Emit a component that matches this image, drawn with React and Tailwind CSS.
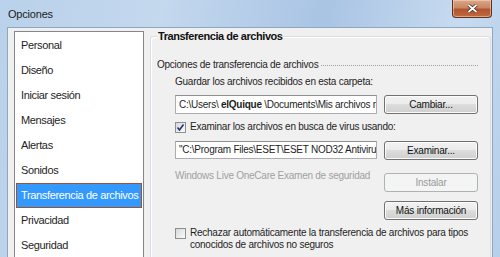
import React from "react";

const font = { fontFamily: "'Liberation Sans', Arial, sans-serif" };

function Btn({ children, disabled }) {
  return (
    <div
      className={
        "w-[94px] h-[19px] shrink-0 rounded-[3px] border flex items-center justify-center text-[10px] tracking-[-0.2px] " +
        (disabled
          ? "border-[#adb2b5] bg-[#f4f4f4] text-[#9a9a9a]"
          : "border-[#707070] bg-[linear-gradient(#f2f2f2_0%,#ebebeb_49%,#dddddd_50%,#cfcfcf_100%)] text-[#111] shadow-[inset_0_0_0_1px_#fcfcfc]")
      }
    >
      {children}
    </div>
  );
}

function Check({ checked }) {
  return (
    <div className="w-[11px] h-[11px] border border-[#8e8f8f] bg-[linear-gradient(135deg,#d8d8d8,#fbfbfb)] flex items-center justify-center shrink-0">
      {checked && (
        <svg width="9" height="9" viewBox="0 0 9 9">
          <path d="M1.5 4.5 L3.5 7 L7.5 1.5" fill="none" stroke="#21327a" strokeWidth="1.6" />
        </svg>
      )}
    </div>
  );
}

export default function App() {
  const items = [
    "Personal",
    "Diseño",
    "Iniciar sesión",
    "Mensajes",
    "Alertas",
    "Sonidos",
    "Transferencia de archivos",
    "Privacidad",
    "Seguridad",
  ];
  return (
    <div
      style={font}
      className="w-[500px] h-[257px] overflow-hidden flex flex-col bg-[linear-gradient(100deg,#b9d1ea_0%,#c4d8ee_30%,#a9c4e4_60%,#c7dbf0_85%,#b6cfea_100%)]"
    >
      {/* title bar */}
      <div className="h-[27px] flex items-start shrink-0">
        <div className="pl-[8px] pt-[7px] text-[11px] tracking-[-0.2px] leading-[14px] text-[#1e1e1e]">Opciones</div>
        <div className="ml-auto mr-[8px] w-[40px] h-[18px] rounded-b-[4px] border border-t-0 border-[#5a3426] bg-[linear-gradient(#dba888_0%,#c98663_45%,#b3542f_55%,#c06a3f_100%)] flex items-center justify-center shadow-[inset_0_0_0_1px_rgba(255,220,200,0.5)]">
          <svg width="11" height="9" viewBox="0 0 11 9">
            <path d="M1.5 1 L9.5 8 M9.5 1 L1.5 8" stroke="#3b2018" strokeWidth="3.2" />
            <path d="M1.5 1 L9.5 8 M9.5 1 L1.5 8" stroke="#fff" strokeWidth="1.8" />
          </svg>
        </div>
      </div>
      {/* body */}
      <div className="flex-1 flex mx-[7px] border-l border-t border-r border-[#8fa6bf] bg-[#f0f0f0]">
        {/* list */}
        <div className="mt-[3px] ml-[6px] w-[130px] shrink-0 bg-white border border-[#828790] border-b-0 flex flex-col pt-[1px] px-[1px] text-[11px] tracking-[-0.35px] text-[#1e1e1e]">
          {items.map((t) =>
            t === "Transferencia de archivos" ? (
              <div
                key={t}
                className="h-[25px] flex items-center pl-[4px] bg-[#3399ff] text-white border border-[#a0522d] whitespace-nowrap"
              >
                {t}
              </div>
            ) : (
              <div key={t} className="h-[25px] flex items-center pl-[5px] whitespace-nowrap">
                {t}
              </div>
            )
          )}
        </div>
        {/* right panel */}
        <div className="flex-1 ml-[6px] mr-[3px] pt-[8px]">
          <div className="border border-[#d5dfe5] border-b-0 rounded-t-[3px] shadow-[inset_1px_1px_0_#fff] h-full">
            <div className="-mt-[9px] pl-[6px] leading-[14px]">
              <span className="bg-[#f0f0f0] px-[1px] text-[11px] tracking-[-0.45px] font-bold text-[#111]">
                Transferencia de archivos
              </span>
            </div>
            <div className="pl-[6px] pr-[12px] text-[10px] tracking-[-0.25px] leading-[12px] text-[#1e1e1e]">
              <div className="mt-[16px] flex items-center gap-[3px]">
                <span className="whitespace-nowrap">Opciones de transferencia de archivos</span>
                <div className="flex-1 border-t border-dotted border-[#a0a0a0] mt-[1px]" />
              </div>
              <div className="pl-[18px]">
                <div className="mt-[5px] whitespace-nowrap">Guardar los archivos recibidos en esta carpeta:</div>
                <div className="mt-[7px] flex gap-[7px]">
                  <div className="w-[202px] h-[19px] border border-[#abadb3] border-t-[#8e8f8f] bg-white flex items-center pl-[3px] overflow-hidden whitespace-nowrap">
                    C:\Users\&nbsp;<b>elQuique</b>&nbsp;\Documents\Mis archivos recibidos
                  </div>
                  <Btn>Cambiar...</Btn>
                </div>
                <div className="mt-[7px] flex items-center gap-[4px]">
                  <Check checked />
                  <span className="whitespace-nowrap">Examinar los archivos en busca de virus usando:</span>
                </div>
                <div className="mt-[8px] flex gap-[7px]">
                  <div className="w-[202px] h-[18px] border border-[#abadb3] border-t-[#8e8f8f] bg-white flex items-center pl-[3px] overflow-hidden whitespace-nowrap">
                    "C:\Program Files\ESET\ESET NOD32 Antivirus
                  </div>
                  <Btn>Examinar...</Btn>
                </div>
                <div className="mt-[13px] flex gap-[7px]">
                  <div className="w-[202px] text-[#a0a0a0] -mt-[3px] whitespace-nowrap">
                    Windows Live OneCare Examen de seguridad
                  </div>
                  <Btn disabled>Instalar</Btn>
                </div>
                <div className="mt-[9px] flex justify-end">
                  <Btn>Más información</Btn>
                </div>
                <div className="mt-[7px] flex items-start gap-[4px]">
                  <div className="mt-[1px]">
                    <Check />
                  </div>
                  <span>
                    Rechazar automáticamente la transferencia de archivos para tipos
                    <br />
                    conocidos de archivos no seguros
                  </span>
                </div>
              </div>
            </div>
          </div>
        </div>
      </div>
    </div>
  );
}
